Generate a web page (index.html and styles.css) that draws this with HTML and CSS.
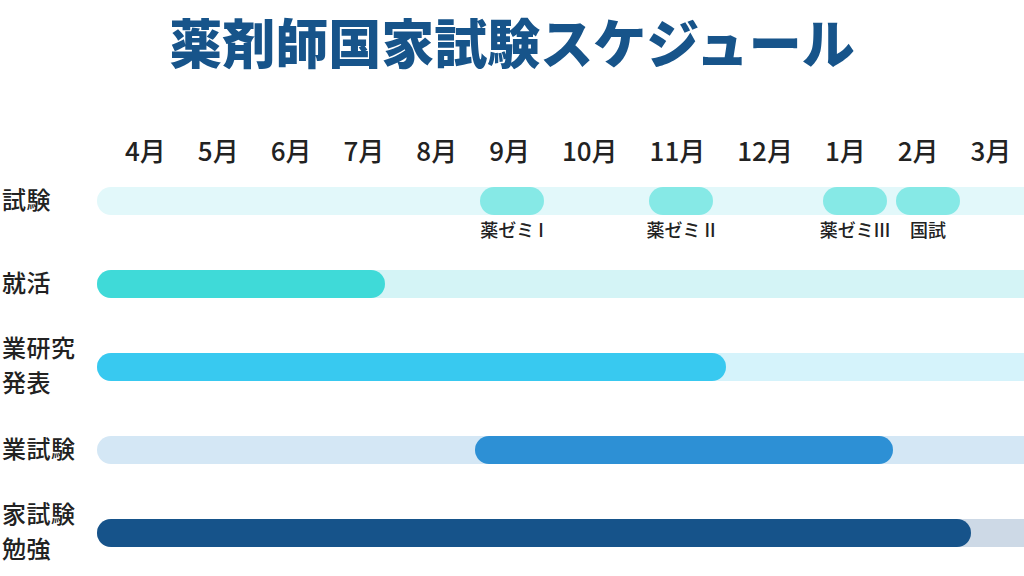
FILE: index.html
```html
<!DOCTYPE html>
<html lang="ja">
<head>
<meta charset="utf-8">
<title>薬剤師国家試験スケジュール</title>
<link rel="stylesheet" href="styles.css">
</head>
<body>
<main class="page">
  <h1 class="title">薬剤師国家試験スケジュール</h1>

  <div class="months">
    <span>4月</span><span>5月</span><span>6月</span><span>7月</span><span>8月</span><span>9月</span>
    <span>10月</span><span>11月</span><span>12月</span><span>1月</span><span>2月</span><span>3月</span>
  </div>

  <div class="chart">
    <div class="label">試験</div>
    <div class="track track-exam">
      <div class="event" style="left:383px"><div class="pill"></div><div class="event-label">薬ゼミ I</div></div>
      <div class="event" style="left:552px"><div class="pill"></div><div class="event-label">薬ゼミ II</div></div>
      <div class="event" style="left:726px"><div class="pill"></div><div class="event-label">薬ゼミIII</div></div>
      <div class="event" style="left:799px"><div class="pill"></div><div class="event-label">国試</div></div>
    </div>

    <div class="label">就活</div>
    <div class="track track-job">
      <div class="fill fill-job" style="left:0;width:288px"></div>
    </div>

    <div class="label">業研究<br>発表</div>
    <div class="track track-research">
      <div class="fill fill-research" style="left:0;width:629px"></div>
    </div>

    <div class="label">業試験</div>
    <div class="track track-grad">
      <div class="fill fill-grad" style="left:378px;width:418px"></div>
    </div>

    <div class="label">家試験<br>勉強</div>
    <div class="track track-national">
      <div class="fill fill-national" style="left:0;width:874px"></div>
    </div>
  </div>
</main>
</body>
</html>
```

FILE: styles.css
```css
html, body {
  margin: 0;
  padding: 0;
  background: #ffffff;
}

body {
  width: 1024px;
  height: 576px;
  overflow: hidden;
  font-family: "Noto Sans CJK JP", "Noto Sans", sans-serif;
  color: #222222;
}

.page {
  display: flex;
  flex-direction: column;
}

.title {
  margin: 0;
  padding-top: 11px;
  font-size: 53px;
  line-height: 60px;
  font-weight: 900;
  color: #17548a;
  text-align: center;
  letter-spacing: 0;
}

.months {
  display: flex;
  gap: 32px;
  margin-top: 64px;
  padding-left: 125px;
  font-size: 26px;
  line-height: 30px;
  font-weight: 500;
  white-space: nowrap;
}

.chart {
  display: grid;
  grid-template-columns: 97px 960px;
  grid-auto-rows: 28px;
  row-gap: 55px;
  align-items: center;
  margin-top: 22px;
}

.label {
  align-self: center;
  margin-bottom: 6px;
  padding-left: 2px;
  font-size: 24px;
  line-height: 35px;
  letter-spacing: 0.5px;
  font-weight: 500;
  white-space: nowrap;
}

.track {
  position: relative;
  height: 28px;
  border-radius: 14px 0 0 14px;
}

.fill {
  position: absolute;
  top: 0;
  height: 28px;
  border-radius: 14px;
}

.event {
  position: absolute;
  top: 0;
  width: 64px;
  display: flex;
  flex-direction: column;
  align-items: center;
}

.pill {
  width: 64px;
  height: 28px;
  border-radius: 14px;
  background: #86e9e6;
}

.event-label {
  margin-top: 2px;
  font-size: 18px;
  line-height: 24px;
  font-weight: 500;
  white-space: nowrap;
  color: #222222;
}

.track-exam { background: #e2f8fa; }
.track-job { background: #d4f4f6; }
.track-research { background: #d5f3fb; }
.track-grad { background: #d4e7f5; }
.track-national { background: #cdd9e6; }

.fill-job { background: #3fdad8; }
.fill-research { background: #38c9f0; }
.fill-grad { background: #2d90d5; }
.fill-national { background: #16538a; }
```
